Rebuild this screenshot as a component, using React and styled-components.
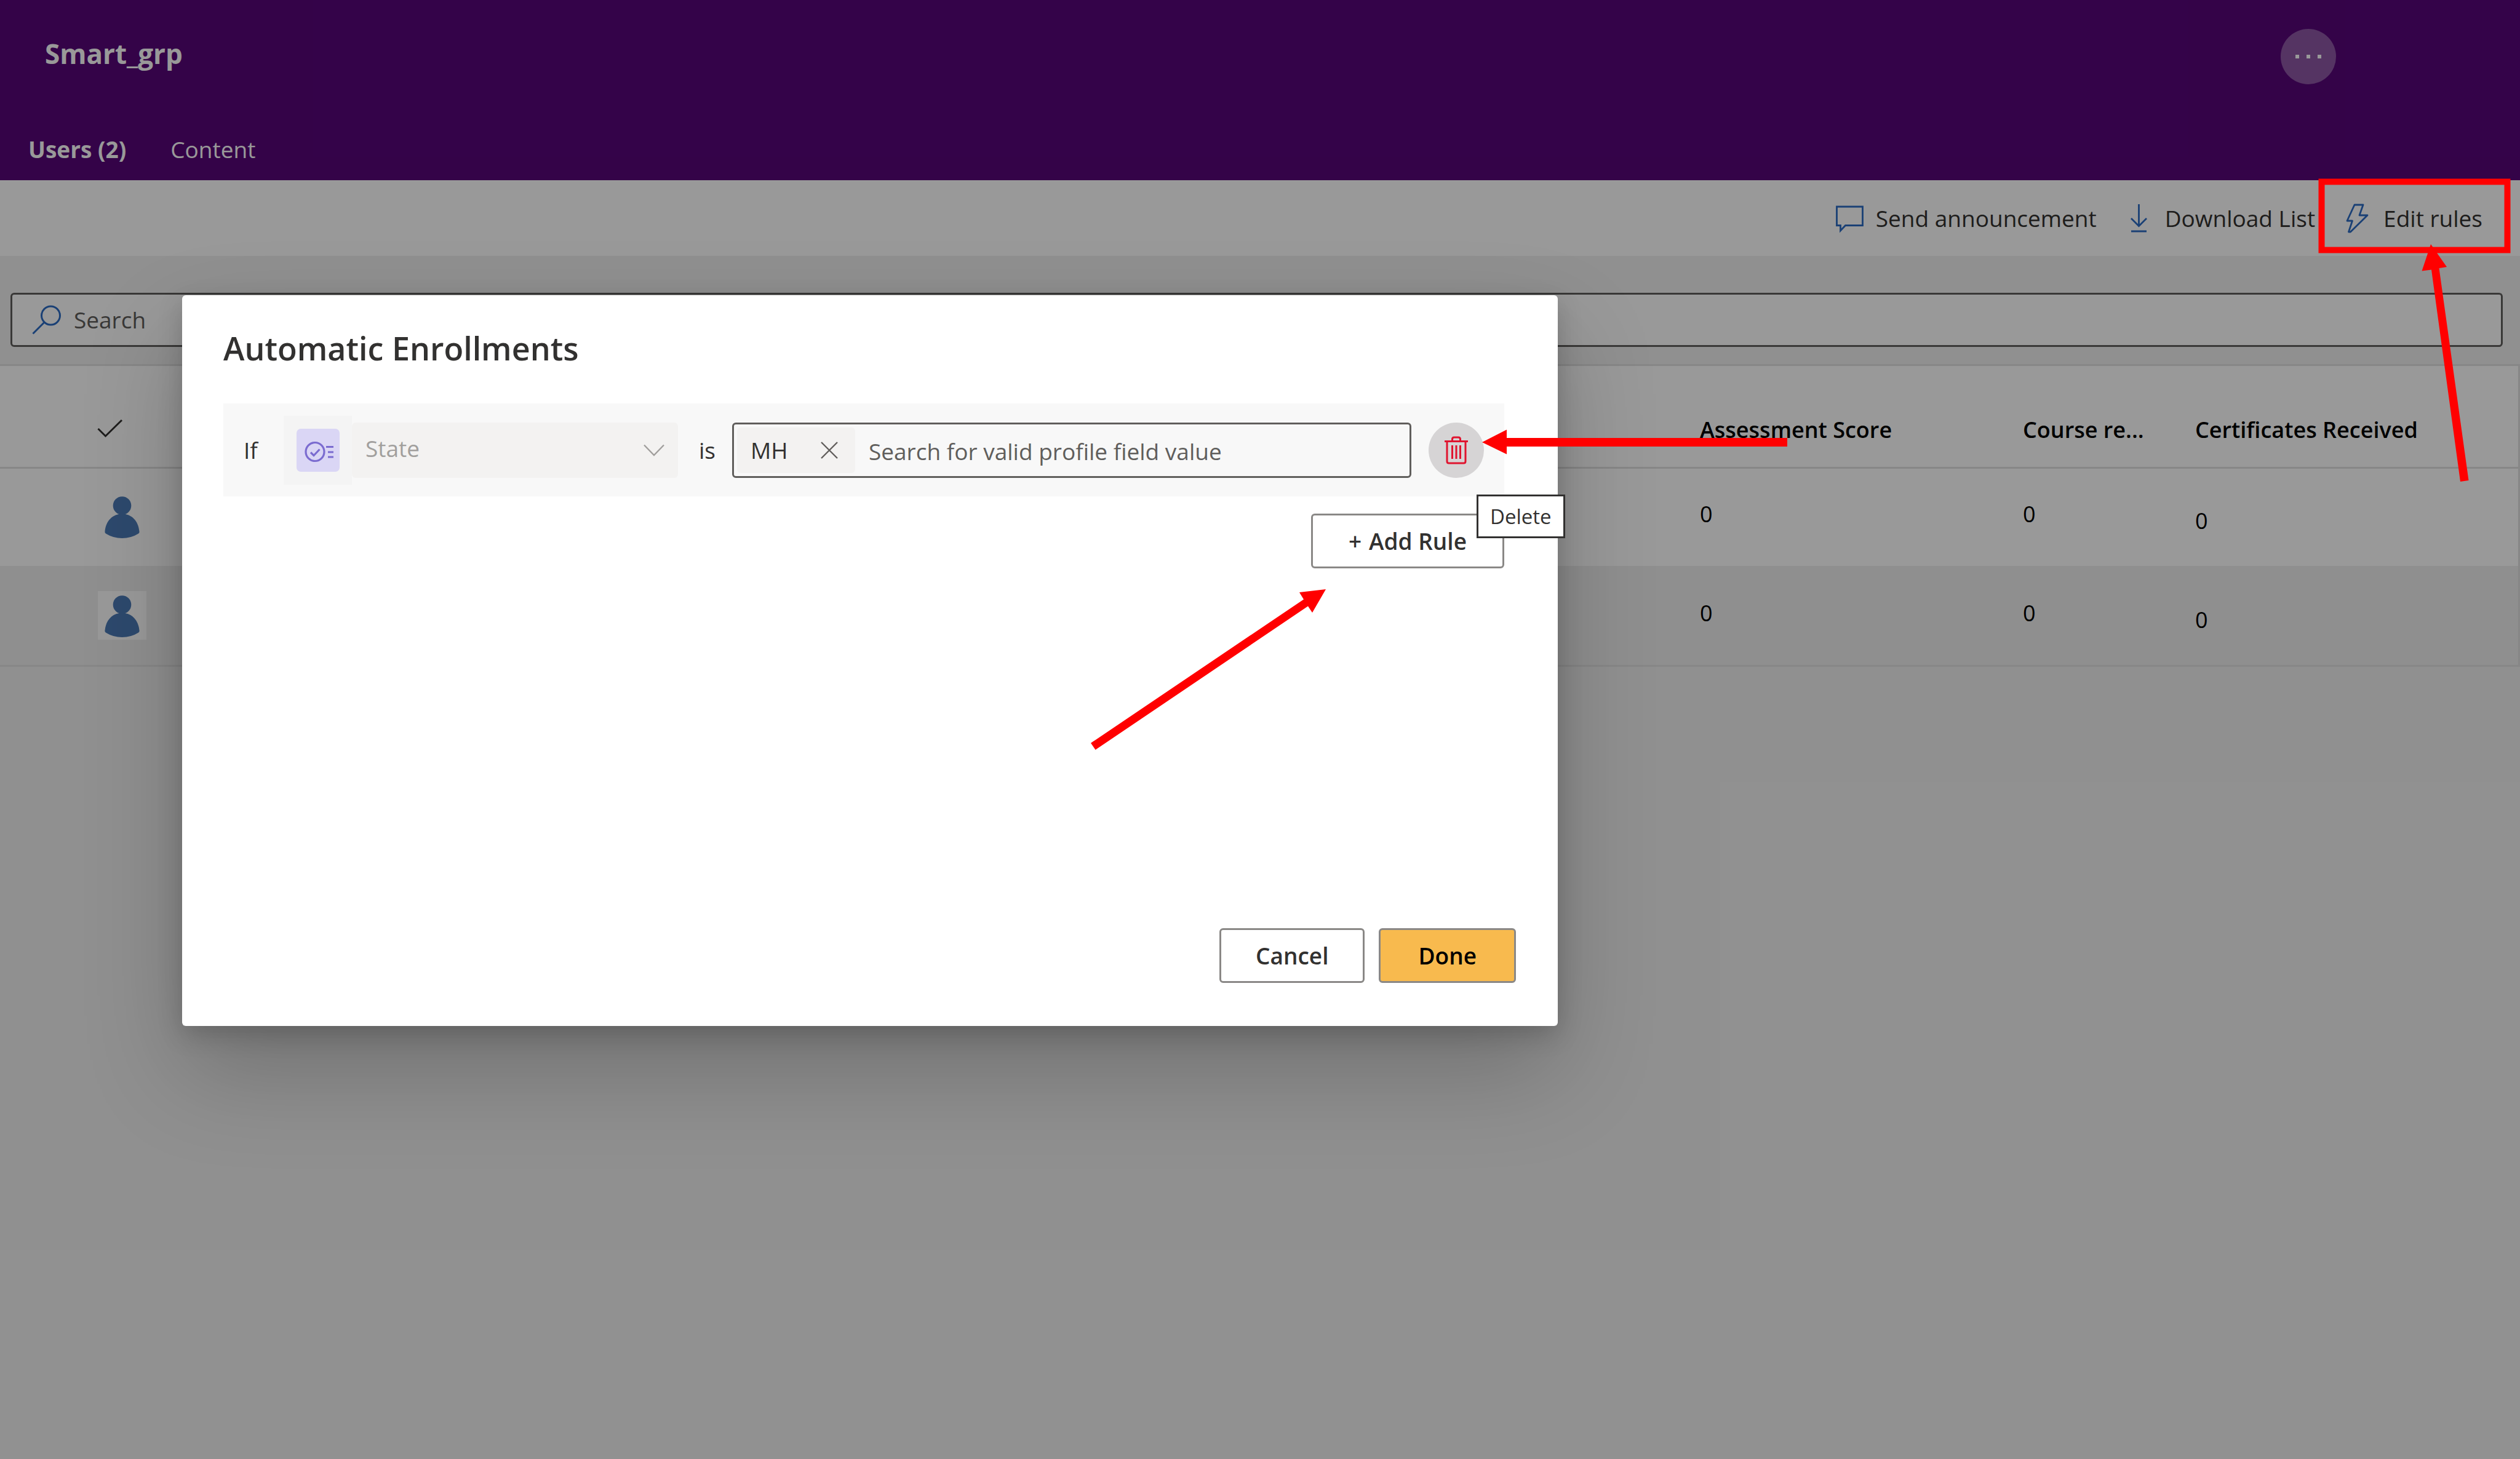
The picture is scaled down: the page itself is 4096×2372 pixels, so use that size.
import React from 'react';
import styled, { createGlobalStyle } from 'styled-components';

const GlobalStyle = createGlobalStyle`
  *, *::before, *::after { box-sizing: border-box; }
  body {
    margin: 0;
    background: #f1f1f1;
    color: #323130;
    font-family: 'Open Sans', 'Noto Sans', sans-serif;
    font-size: 37px;
    line-height: 50px;
  }
  button, input, select { font: inherit; color: inherit; margin: 0; }
  button { cursor: pointer; }
`;

const Page = styled.div`
  position: relative;
  min-height: 100vh;
  overflow: hidden;
`;

const GroupHeader = styled.header`
  background: #570579;
  color: #fff;
  padding-bottom: 25px;
`;

const TitleBar = styled.div`
  display: flex;
  justify-content: space-between;
  align-items: flex-start;
  padding: 47px 299px 0 73px;
`;

const GroupName = styled.h1`
  margin: 0;
  font-size: 44px;
  font-weight: 700;
  line-height: 80px;
`;

const RoundButton = styled.button`
  display: flex;
  align-items: center;
  justify-content: center;
  width: 90px;
  height: 90px;
  padding: 0;
  border: 0;
  border-radius: 50%;
  background: ${(p) => p.$fill};
`;

const Tabs = styled.div`
  display: flex;
  gap: 72px;
  margin-top: 81px;
  padding-left: 46px;
`;

const Tab = styled.button`
  padding: 0;
  border: 0;
  background: none;
  color: #fff;
  font-weight: ${(p) => (p['aria-selected'] ? 700 : 400)};
`;

const CommandBar = styled.div`
  display: flex;
  justify-content: flex-end;
  gap: 46px;
  height: 123px;
  padding-right: 61px;
  background: #fff;
`;

const Command = styled.button`
  display: flex;
  align-items: center;
  gap: 20px;
  padding: 0;
  border: 0;
  background: none;
`;

const SearchArea = styled.div`
  padding: 60px 28px 28px 17px;
`;

const SearchBox = styled.label`
  display: flex;
  align-items: center;
  gap: 20px;
  height: 88px;
  padding-left: 32px;
  border: 3px solid #605e5c;
  border-radius: 6px;
  background: #fff;
`;

const TextInput = styled.input`
  flex: 1;
  min-width: 0;
  padding: 0;
  border: 0;
  outline: 0;
  background: none;
  &::placeholder { color: #605e5c; opacity: 1; }
`;

const UserTable = styled.table`
  width: 100%;
  table-layout: fixed;
  border-collapse: separate;
  border-spacing: 0;
  border: 3px solid #e1e1e1;
  border-width: 3px 3px 0 0;
  background: #fff;
  color: #000;
`;

const Col = styled.col`
  width: ${(p) => p.$w}px;
`;

const HeaderCell = styled.th`
  height: 167px;
  padding: 79px 0 0 ${(p) => p.$indent || 0}px;
  border-bottom: 3px solid #e1e1e1;
  font-size: 36px;
  font-weight: 600;
  text-align: left;
  vertical-align: top;
`;

const UserRow = styled.tr`
  background: ${(p) => (p.$striped ? '#eeeeee' : '#fff')};
  & > td { border-bottom: 3px solid ${(p) => (p.$striped ? '#e1e1e1' : '#eeeeee')}; }
`;

const Cell = styled.td`
  height: 161px;
  padding: 49px 0 0;
  font-size: 36px;
  vertical-align: top;
`;

const AvatarCell = styled(Cell)`
  padding: 38px 0 0 159px;
`;

const LinkCell = styled(Cell)`
  padding-top: 60px;
`;

const Avatar = styled.div`
  width: 79px;
  height: 79px;
  background: #fff;
`;

const Backdrop = styled.div`
  position: absolute;
  inset: 0;
  padding: 480px 0 0 296px;
  background: rgba(0, 0, 0, 0.4);
`;

const Dialog = styled.section`
  display: flex;
  flex-direction: column;
  width: 2236px;
  min-height: 1188px;
  padding: 50px 0 70px;
  border-radius: 6px;
  background: #fff;
  box-shadow: 0 72px 160px rgba(0, 0, 0, 0.22), 0 13px 40px rgba(0, 0, 0, 0.18);
`;

const DialogTitle = styled.h2`
  margin: 0 67px 54px;
  font-size: 52px;
  font-weight: 600;
  line-height: 72px;
`;

const Rules = styled.div`
  display: flex;
  flex-direction: column;
  align-items: flex-end;
  gap: 28px;
  margin: 0 87px 0 67px;
`;

const Rule = styled.div`
  display: flex;
  align-items: center;
  align-self: stretch;
  height: 151px;
  padding: 0 33px;
  background: #f8f8f8;
`;

const RuleWord = styled.label`
  width: ${(p) => p.$w}px;
  margin-left: ${(p) => p.$gap || 0}px;
`;

const FieldIcon = styled.div`
  display: flex;
  align-items: center;
  padding-left: 21px;
  width: 111px;
  height: 112px;
  background: #f4f4f4;
`;

const FieldSelectWrap = styled.div`
  position: relative;
  width: 530px;
`;

const FieldSelect = styled.select`
  display: block;
  width: 100%;
  height: 90px;
  padding: 0 90px 6px 22px;
  border: 0;
  border-radius: 6px;
  appearance: none;
  background: #f3f2f1;
  color: #a19f9d;
  opacity: 1;
`;

const Chevron = styled.svg`
  position: absolute;
  top: 35px;
  right: 22px;
`;

const ValuePicker = styled.div`
  display: flex;
  align-items: center;
  flex: 1;
  height: 90px;
  gap: 22px;
  padding: 0 5px;
  border: 3px solid #605e5c;
  border-radius: 6px;
  & > input { padding-top: 4px; }
`;

const ValueTag = styled.span`
  display: flex;
  align-items: center;
  justify-content: space-between;
  width: 192px;
  height: 74px;
  padding: 0 28px 0 22px;
  border-radius: 6px;
  background: #f3f2f1;
`;

const TagRemove = styled.button`
  display: flex;
  padding: 0;
  border: 0;
  background: none;
`;

const DeleteSlot = styled.div`
  position: relative;
  margin-left: 28px;
`;

const Tooltip = styled.div`
  position: absolute;
  z-index: 1;
  top: 117px;
  left: 78px;
  padding: 10px 19px 9px;
  border: 3px solid #323130;
  background: #fff;
  font-size: 33px;
  line-height: 46px;
`;

const DialogButton = styled.button`
  display: flex;
  align-items: center;
  gap: 12px;
  height: 89px;
  padding: 0 ${(p) => p.$pad}px;
  border: 3px solid #8a8886;
  border-radius: 6px;
  background: ${(p) => (p.$primary ? '#f8ba4e' : '#fff')};
  color: ${(p) => (p.$primary ? '#000' : '#323130')};
  font-weight: 600;
`;

const DialogFooter = styled.footer`
  display: flex;
  justify-content: flex-end;
  gap: 23px;
  margin-top: auto;
  padding-right: 68px;
`;

const Markup = styled.svg`
  position: absolute;
  top: 0;
  left: 0;
  width: 100%;
  pointer-events: none;
`;

const BLUE = '#2c6cc4';

const SearchIcon = () => (
  <svg width="48" height="48" viewBox="0 0 48 48" fill="none" stroke={BLUE} strokeWidth="3" aria-hidden="true">
    <circle cx="30.5" cy="17" r="15" />
    <path d="M20 28 1.5 46.5" />
  </svg>
);

const ChatIcon = () => (
  <svg width="45" height="48" viewBox="0 0 45 48" fill="none" stroke={BLUE} strokeWidth="2.8" aria-hidden="true">
    <path d="M1.5 5h42v30.500H15.500L7.500 44V35.500h-6z" />
  </svg>
);

const DownloadIcon = () => (
  <svg width="45" height="48" viewBox="0 0 45 48" fill="none" stroke={BLUE} strokeWidth="2.8" aria-hidden="true">
    <path d="M22.5 1v35M10 24l12.5 12.500L35 24M10 45h25" />
  </svg>
);

const BoltIcon = () => (
  <svg width="45" height="48" viewBox="0 0 45 48" fill="none" stroke={BLUE} strokeWidth="2.8" strokeLinejoin="round" aria-hidden="true">
    <path d="M18 2h14l-6 17h13L11.500 46H8.500l6-18H6z" />
  </svg>
);

const CheckIcon = () => (
  <svg width="42" height="32" viewBox="0 0 42 32" fill="none" stroke="#323130" strokeWidth="3" role="img" aria-label="Select all">
    <path d="M1.5 17 13.500 29 40 3" />
  </svg>
);

const PersonIcon = () => (
  <svg width="79" height="79" viewBox="0 0 79 79" fill="#4b7ab6" role="img" aria-label="User">
    <circle cx="39.5" cy="22" r="14.8" />
    <path d="M11.5 64C13 47 24 35.500 39.500 35.500S66 47 67.500 64Q68 66 66 67.500Q54 75 39.500 75T13 67.500Q11 66 11.500 64z" />
  </svg>
);

const MoreIcon = () => (
  <svg width="44" height="8" viewBox="0 0 44 8" fill="#fff" aria-hidden="true">
    <path d="M1 1h6v6H1zM19 1h6v6h-6zM37 1h6v6h-6z" />
  </svg>
);

const ProfileFieldIcon = () => (
  <svg width="70" height="70" viewBox="0 0 70 70" fill="none" aria-hidden="true">
    <rect width="70" height="70" rx="7" fill="#dad6f5" />
    <g stroke="#7b6cd0" strokeWidth="3.2">
      <circle cx="30" cy="37.5" r="15" />
      <path d="M23 38.500 28 43.500 37.500 33.500M48 29.500h12M51 38h9M51 46h9" />
    </g>
  </svg>
);

const CloseIcon = () => (
  <svg width="28" height="28" viewBox="0 0 28 28" fill="none" stroke="#605e5c" strokeWidth="2.4" aria-hidden="true">
    <path d="M1 1l26 26M27 1 1 27" />
  </svg>
);

const TrashIcon = () => (
  <svg width="38" height="46" viewBox="0 0 38 46" fill="none" stroke="#e0142f" strokeWidth="3" aria-hidden="true">
    <path d="M0 8.500h38M12.500 8V5Q12.500 2 15.500 2h7Q25.500 2 25.500 5v3M4 8.500V41q0 3 3 3h24q3 0 3-3V8.500M12.500 15v22M19 15v22M25.500 15v22" />
  </svg>
);

const commands = [
  { label: 'Send announcement', Icon: ChatIcon },
  { label: 'Download List', Icon: DownloadIcon },
  { label: 'Edit rules', Icon: BoltIcon },
];

const users = [
  { id: 1, score: 0, courses: 0, certificates: 0 },
  { id: 2, score: 0, courses: 0, certificates: 0 },
];

export default function App() {
  return (
    <Page>
      <GlobalStyle />
      <GroupHeader>
        <TitleBar>
          <GroupName>Smart_grp</GroupName>
          <RoundButton $fill="rgba(255, 255, 255, 0.33)" aria-label="More options">
            <MoreIcon />
          </RoundButton>
        </TitleBar>
        <Tabs role="tablist">
          <Tab role="tab" aria-selected={true}>Users (2)</Tab>
          <Tab role="tab" aria-selected={false}>Content</Tab>
        </Tabs>
      </GroupHeader>

      <CommandBar>
        {commands.map(({ label, Icon }) => (
          <Command key={label}>
            <Icon />
            {label}
          </Command>
        ))}
      </CommandBar>

      <SearchArea>
        <SearchBox>
          <SearchIcon />
          <TextInput type="text" placeholder="Search" aria-label="Search" />
        </SearchBox>
      </SearchArea>

      <UserTable>
        <colgroup>
          <col />
          <Col $w={525} />
          <Col $w={280} />
          <Col $w={525} />
        </colgroup>
        <thead>
          <tr>
            <HeaderCell $indent={158}><CheckIcon /></HeaderCell>
            <HeaderCell>Assessment Score</HeaderCell>
            <HeaderCell>Course re...</HeaderCell>
            <HeaderCell>Certificates Received</HeaderCell>
          </tr>
        </thead>
        <tbody>
          {users.map((user, index) => (
            <UserRow key={user.id} $striped={index % 2 === 1}>
              <AvatarCell>
                <Avatar><PersonIcon /></Avatar>
              </AvatarCell>
              <Cell>{user.score}</Cell>
              <Cell>{user.courses}</Cell>
              <LinkCell>{user.certificates}</LinkCell>
            </UserRow>
          ))}
        </tbody>
      </UserTable>

      <Backdrop>
        <Dialog role="dialog" aria-labelledby="dialog-title">
          <DialogTitle id="dialog-title">Automatic Enrollments</DialogTitle>
          <Rules>
            <Rule>
              <RuleWord $w={65} htmlFor="rule-field">If</RuleWord>
              <FieldIcon><ProfileFieldIcon /></FieldIcon>
              <FieldSelectWrap>
                <FieldSelect id="rule-field" disabled defaultValue="State">
                  <option>State</option>
                </FieldSelect>
                <Chevron width="34" height="20" viewBox="0 0 34 20" fill="none" stroke="#a19f9d" strokeWidth="2.4">
                  <path d="M1 1.5 17 18 33 1.5" />
                </Chevron>
              </FieldSelectWrap>
              <RuleWord $w={54} $gap={34} htmlFor="rule-value">is</RuleWord>
              <ValuePicker>
                <ValueTag>
                  MH
                  <TagRemove aria-label="Remove MH"><CloseIcon /></TagRemove>
                </ValueTag>
                <TextInput id="rule-value" type="text" placeholder="Search for valid profile field value" />
              </ValuePicker>
              <DeleteSlot>
                <RoundButton $fill="#d6d4d5" aria-label="Delete rule">
                  <TrashIcon />
                </RoundButton>
                <Tooltip role="tooltip">Delete</Tooltip>
              </DeleteSlot>
            </Rule>
            <DialogButton $pad={58}>
              <span>+</span>
              <span>Add Rule</span>
            </DialogButton>
          </Rules>
          <DialogFooter>
            <DialogButton $pad={56}>Cancel</DialogButton>
            <DialogButton $pad={61} $primary>Done</DialogButton>
          </DialogFooter>
        </Dialog>
      </Backdrop>

      <Markup viewBox="0 0 4096 2372" fill="#f00" aria-hidden="true">
        <rect x="3773.5" y="295.5" width="302" height="111" fill="none" stroke="#f00" strokeWidth="10" />
        <path d="M3951 397l26 37-12.5 2L4012.5 781l-13.5 2L3952 438.500l-15.500 2z" />
        <path d="M2409 719l40-20.5V712H2905v14H2449v12.500z" />
        <path d="M2155 958l-22 38-7-10.500L1780.500 1219l-7.500-11L2119 974.500l-7-11.500z" />
      </Markup>
    </Page>
  );
}
